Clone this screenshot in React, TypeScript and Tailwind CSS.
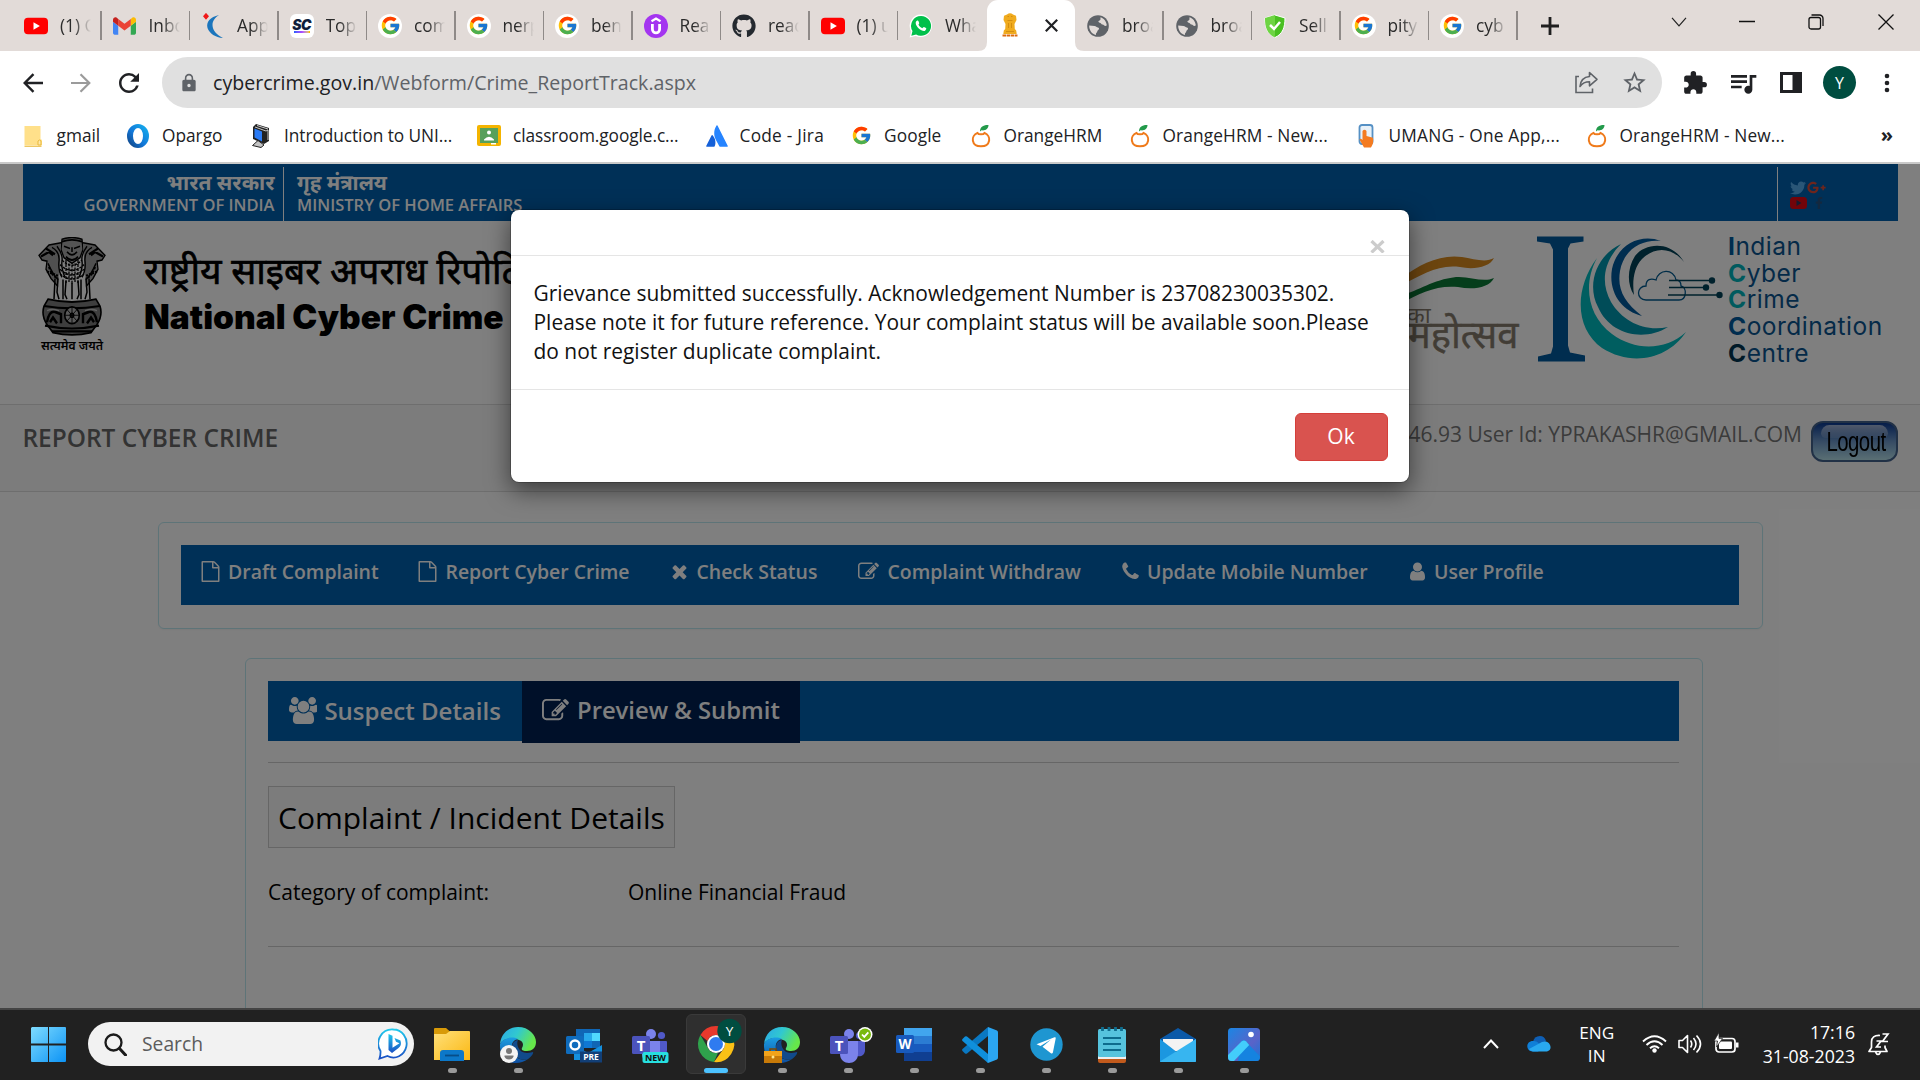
import React from 'react';
import { FcGoogle } from 'react-icons/fc';
import { FaGithub, FaYoutube, FaTwitter, FaGooglePlusG, FaFacebookF } from 'react-icons/fa';
import { MdLock, MdStarBorder, MdExtension, MdQueueMusic, MdRefresh } from 'react-icons/md';

/* ---------- small shared icons ---------- */
const YouTube = () => (
  <svg width="24" height="24" viewBox="0 0 24 24">
    <rect x="0" y="3.7" width="24" height="16.6" rx="4" fill="#f00" />
    <path d="M9.5 8.2v7.6l6.4-3.8z" fill="#fff" />
  </svg>
);
const Gmail = () => (
  <svg width="23" height="18" viewBox="52 42 88 66">
    <path fill="#4285f4" d="M58 108h14V74L52 59v43c0 3.32 2.69 6 6 6" />
    <path fill="#34a853" d="M120 108h14c3.32 0 6-2.69 6-6V59l-20 15" />
    <path fill="#fbbc04" d="M120 48v26l20-15v-8c0-7.42-8.47-11.65-14.4-7.2" />
    <path fill="#ea4335" d="M72 74V48l24 18 24-18v26L96 92" />
    <path fill="#c5221f" d="M52 51v8l20 15V48l-5.600-4.200c-5.940-4.450-14.400-.22-14.400 7.200" />
  </svg>
);
const AppTrana = () => (
  <svg width="24" height="26" viewBox="0 0 24 26">
    <path d="M5 1l2 2.300-2 2.300L3 3.300z" fill="#f01818" stroke="#f01818" strokeWidth="1.500" />
    <path d="M18 2C9 4 5 9 6.500 15c2 5.500 8 9.500 15.500 10-6-3-10.500-7.500-10.500-13 0-4 2.500-7.500 6.500-10z" fill="#1b75bc" />
  </svg>
);
const ScLogo = () => (
  <div className="flex h-6 w-6 flex-col items-center justify-center rounded-md bg-white">
    <span className="font-['Inter'] text-[14px] leading-[13px] font-black tracking-tighter text-[#101f3c] italic">SC</span>
    <span className="h-[2px] w-4 bg-linear-to-r from-blue-600 via-purple-500 to-yellow-400" />
  </div>
);
const GoogleTab = () => (
  <div className="flex h-6 w-6 items-center justify-center rounded-full bg-white"><FcGoogle size={21} /></div>
);
const Udemy = () => (
  <svg width="24" height="24" viewBox="0 0 24 24">
    <circle cx="12" cy="12" r="12" fill="#a435f0" />
    <path d="M7.500 7.300L12 4.600l4.500 2.700" fill="none" stroke="#fff" strokeWidth="2.200" />
    <path d="M8.400 10v5.300c0 4.800 7.200 4.800 7.200 0V10" fill="none" stroke="#fff" strokeWidth="2.800" />
  </svg>
);
const WhatsApp = () => (
  <svg width="24" height="24" viewBox="0 0 24 24">
    <path d="M12 .5A11.300 11.300 0 0 0 2.300 17.600L.6 23.500l6-1.600A11.300 11.300 0 1 0 12 .5z" fill="#fff" />
    <path d="M12 2a9.900 9.900 0 0 0-8.500 15l-1.200 4.700 4.800-1.300A9.900 9.900 0 1 0 12 2z" fill="#00c04b" />
    <path d="M8.200 6.500c.5-.2 1 0 1.200.5l.8 1.900c.2.500-.8 1.500-.8 1.700.8 1.600 2.200 2.900 3.900 3.600.4 0 1.200-1.400 1.700-1.200l2 1c.8.400-.1 2.200-1 2.700-2.500 1.300-9.200-3.500-9.300-7.800 0-1 .6-2 1.500-2.400z" fill="#fff" />
  </svg>
);
const MiniEmblem = () => (
  <svg width="16" height="25" viewBox="0 0 16 25" fill="#f0ab1e">
    <path d="M5 1.500Q8-.8 11 1.500l3 1.200.5 4.300-2 4 .3 5 1.400 1.500.5 3.500H1.300l.5-3.500L3.200 16l.3-5-2-4L2 2.700z" />
    <path d="M5.500 3.500h1.500m2 0h1.500M5.500 7.500h5M6.500 10v5M9.500 10v5M4 18.500h8" stroke="#d08a10" strokeWidth=".9" />
    <path d="M.5 22.500h15" stroke="#dc6a0c" strokeWidth="2.200" strokeDasharray="3.500 .6" />
  </svg>
);
const Shield = () => (
  <svg width="24" height="24" viewBox="0 0 24 24">
    <path d="M12 1l10 3c0 9-2 16-10 19.500C4 20 2 13 2 4z" fill="#49c021" stroke="#fff" />
    <path d="M12 1L2 4c0 9 2 16 10 19.500z" fill="#6ed443" />
    <path d="M7 11l4 4 6-7" fill="none" stroke="#fff" strokeWidth="2.500" />
  </svg>
);
const Globe = () => (
  <svg width="22" height="22" viewBox="0 0 22 22">
    <circle cx="11" cy="11" r="10.800" fill="#5f6368" />
    <path d="M13.500 2.200c3.500 1 6 4.500 6.300 8-.6.800-1.800 1-2.600.3-.8-1.200-2.700-.7-3.200-2-.4-1-2.300-.6-2.600-1.700-.2-1.200 1.600-1 2-2z" fill="#e2dbd8" />
    <path d="M2.200 10.500l5.300.5c1.500.3 2 1.300 3.500 1.500 1.600.3 1.200 2.200 0 2.700-1 .5-.5 2-1.500 2.600-.8.500-.4 1.500-.5 2.200-4-.8-7-4.800-6.800-9.500z" fill="#e2dbd8" />
  </svg>
);

type TabInfo = { icon: React.ReactNode; title: string; sep?: boolean };
const leftTabs: TabInfo[] = [
  { icon: <YouTube />, title: '(1) C', sep: true },
  { icon: <Gmail />, title: 'Inbo', sep: true },
  { icon: <AppTrana />, title: 'App', sep: true },
  { icon: <ScLogo />, title: 'Top', sep: true },
  { icon: <GoogleTab />, title: 'com', sep: true },
  { icon: <GoogleTab />, title: 'nerp', sep: true },
  { icon: <GoogleTab />, title: 'ben', sep: true },
  { icon: <Udemy />, title: 'Rea', sep: true },
  { icon: <FaGithub size={24} color="#24292f" />, title: 'reac', sep: true },
  { icon: <YouTube />, title: '(1) u', sep: true },
  { icon: <WhatsApp />, title: 'Wha' },
];
const rightTabs: TabInfo[] = [
  { icon: <Globe />, title: 'broa', sep: true },
  { icon: <Globe />, title: 'broa', sep: true },
  { icon: <Shield />, title: 'Sell', sep: true },
  { icon: <GoogleTab />, title: 'pity', sep: true },
  { icon: <GoogleTab />, title: 'cyb', sep: true },
];
const Tab = ({ icon, title, sep }: TabInfo) => (
  <div className="flex h-[51px] w-[88.5px] shrink-0 items-center pl-[11px]">
    <span className="flex w-6 shrink-0 items-center justify-center">{icon}</span>
    <span className="ml-[12px] w-[31px] shrink-0 overflow-hidden [mask-image:linear-gradient(to_right,black_45%,transparent)] text-[17.3px] whitespace-nowrap text-[#2b2b2b]">{title}</span>
    {sep && <span className="ml-auto h-[29px] w-[1.5px] bg-[#8f8a88]" />}
  </div>
);

const TabStrip = () => (
  <div className="flex h-[51px] bg-[#e2dbd8] pl-[13px]">
    {leftTabs.map((t, i) => <Tab key={i} {...t} />)}
    <div className="relative flex h-[51px] w-[88.5px] shrink-0 items-center rounded-t-[11px] bg-white pl-[15px]">
      <svg className="absolute bottom-0 -left-[9px]" width="9" height="9"><path d="M9 0v9H0Q9 9 9 0z" fill="#fff" /></svg>
      <svg className="absolute -right-[9px] bottom-0" width="9" height="9"><path d="M0 0v9h9Q0 9 0 0z" fill="#fff" /></svg>
      <MiniEmblem />
      <svg className="ml-[27px]" width="13" height="13" viewBox="0 0 13 13"><path d="M.8.800l11.400 11.400M12.200.8L.8 12.200" stroke="#202124" strokeWidth="2.200" /></svg>
    </div>
    {rightTabs.map((t, i) => <Tab key={i} {...t} />)}
    <svg className="mt-[17px] ml-[23px]" width="18" height="18"><path d="M9 0v18M0 9h18" stroke="#1f1f1f" strokeWidth="2.800" /></svg>
    <div className="mt-[14px] mr-[26px] ml-auto flex h-4 items-center">
      <svg width="16" height="10" className="mr-[52px]"><path d="M1 .8l7 8 7-8" fill="none" stroke="#222" strokeWidth="1.200" /></svg>
      <svg width="16" height="16" className="mr-[53px]"><path d="M0 7.500h16" stroke="#111" strokeWidth="1.500" /></svg>
      <svg width="16" height="16" className="mr-[54px]" fill="none" stroke="#111" strokeWidth="1.300"><rect x="1" y="3.500" width="11.500" height="11.500" rx="2" /><path d="M3.500 1h8a3.500 3.500 0 0 1 3.500 3.500v7.500" /></svg>
      <svg width="16" height="16"><path d="M.5.500l15 15M15.500.5l-15 15" stroke="#111" strokeWidth="1.300" /></svg>
    </div>
  </div>
);

const Toolbar = () => (
  <div className="flex h-[63px] items-center bg-white">
    <svg className="ml-[23px]" width="20" height="20" viewBox="0 0 20 20" fill="none" stroke="#202124" strokeWidth="2.400"><path d="M20 10H2M10.500 1.200L1.700 10l8.800 8.800" /></svg>
    <svg className="ml-[28px]" width="20" height="20" viewBox="0 0 20 20" fill="none" stroke="#9b9b9b" strokeWidth="2.200"><path d="M0 10h18M9.500 1.200l8.800 8.800-8.800 8.800" /></svg>
    <MdRefresh className="ml-[23px] shrink-0" size={30} color="#202124" />
    <div className="ml-[18px] flex h-[51px] w-[1500px] shrink-0 items-center rounded-full bg-[#e0e0e0]">
      <MdLock className="ml-[17px]" size={20} color="#5f6368" />
      <span className="ml-[14px] text-[19.6px] text-[#5f6368]"><span className="text-[#202124]">cybercrime.gov.in</span>/Webform/Crime_ReportTrack.aspx</span>
      <svg className="mr-[22px] ml-auto" width="24" height="23" viewBox="0 0 24 23" fill="none" stroke="#5f6368" strokeWidth="1.600">
        <path d="M4 5.500H1V21.500h16.500v-4" /><path d="M14.500 1.500l7.500 6.800-7.500 6.500v-4c-4 0-7 1.200-9.500 4.700.5-5.500 3.500-9.500 9.500-10z" strokeLinejoin="round" />
      </svg>
      <MdStarBorder className="mr-[14px]" size={27} color="#5f6368" />
    </div>
    <MdExtension className="ml-[20px]" size={26} color="#202124" />
    <MdQueueMusic className="ml-[19px]" size={32} color="#202124" />
    <svg className="ml-[21px]" width="22" height="21"><path fillRule="evenodd" d="M0 0h22v21H0zM3 3v15h9.500V3z" fill="#202124" /></svg>
    <span className="ml-[21px] flex h-[33px] w-[33px] items-center justify-center rounded-full bg-[#004d40] text-[16px] text-white">Y</span>
    <svg className="ml-[28px]" width="6" height="20" fill="#202124"><circle cx="3" cy="3" r="2.300" /><circle cx="3" cy="10" r="2.300" /><circle cx="3" cy="17" r="2.300" /></svg>
  </div>
);

const Folder = () => <svg width="18" height="22" viewBox="0 0 18 22"><path d="M.5 1h16v13l1.500 1v5.500H.5z" fill="#ffe08a" /><path d="M14 20v-4q1.500-2 3 0v4z" fill="#ffe9ac" stroke="#e9b93c" /><path d="M.5 21.300h17" stroke="#e9b93c" /></svg>;
const Opargo = () => (
  <svg width="22" height="24" viewBox="0 0 22 24">
    <defs><linearGradient id="opg" x1="1" y1="0" x2="0" y2="1"><stop offset="0" stopColor="#15b8f2" /><stop offset=".55" stopColor="#1277d8" /><stop offset="1" stopColor="#123a72" /></linearGradient></defs>
    <path fillRule="evenodd" d="M11 0a11 12 0 1 0 0 24 11 12 0 0 0 0-24zm0 4a5 8 0 1 1 0 16 5 8 0 0 1 0-16z" fill="url(#opg)" />
  </svg>
);
const Unix = () => (
  <svg width="18" height="24" viewBox="0 0 18 24">
    <path d="M4 0l13 4v13l-5 3L1 15V3z" fill="#222" />
    <path d="M5 1.500l11 3.500M3 3l11 4M14 7l2-1v10" stroke="#ddd" strokeWidth=".9" fill="none" />
    <path d="M2.500 4.500L10 7.500v10l-7.500-4z" fill="#2a7bf6" />
    <path d="M.5 21.500l5.500-5 6 4.500-3 2.500z" fill="#c4c4c4" stroke="#222" />
  </svg>
);
const Classroom = () => (
  <svg width="24" height="21" viewBox="0 0 24 21">
    <rect width="24" height="21" rx="2" fill="#f4b400" /><rect x="3" y="3" width="18" height="15" fill="#57a05b" />
    <circle cx="12" cy="7.500" r="2" fill="#fff" /><path d="M7 14.500q5-5.500 10 0v1H7z" fill="#fff" /><path d="M14 18h5v1.500h-5z" fill="#fff" />
  </svg>
);
const Jira = () => (
  <svg width="22" height="22" viewBox="0 0 22 22">
    <path d="M6.600 10.200q-.6-.7-1.100.2L.2 21q-.2.700.5.700h7.400q.4 0 .6-.4c1.600-3.300.6-8.300-2.100-11.100z" fill="#1560d8" />
    <path d="M10.500.6c-3 4.700-2.800 10-.8 13.900l3.600 6.800q.2.400.6.400h7.400q.7 0 .5-.7L11.500.6q-.5-.7-1 0z" fill="#2684ff" />
  </svg>
);
const Orange = () => (
  <svg width="20" height="24" viewBox="0 0 20 24">
    <path d="M6.500 9C-.5 11.500 0 22.300 10 22.300S20.500 11.500 13.500 9C12.500 10.800 7.500 10.800 6.500 9z" fill="#fff" stroke="#ef7a1a" strokeWidth="2" />
    <path d="M9 7.500C9 3 12 .8 17.500 1 17.500 5 14 7 10.500 6.300z" fill="#239a4b" />
  </svg>
);
const Umang = () => (
  <svg width="16" height="24" viewBox="0 0 16 24">
    <rect x="1.500" y="1" width="13" height="19" rx="2.500" fill="#e8f1f8" stroke="#5590c4" strokeWidth="1.800" />
    <path d="M4.500 7q2-2.500 4 0v5l6.500 1.800q1 5.200-2 9.700H6L1.500 15.500q1-1.500 3 .5z" fill="#f47b20" />
  </svg>
);

const Bookmarks = () => (
  <div className="flex h-[50px] items-center border-b-2 border-[#c9c9c9] bg-white pr-[27px] pb-[5px] pl-[20.5px] text-[17.3px] text-[#202124]">
    {[
      { i: <Folder />, t: 'gmail', w: 'w-[105.5px]', s: '' },
      { i: <Opargo />, t: 'Opargo', w: 'w-[123px]', s: '' },
      { i: <Unix />, t: 'Introduction to UNI...', w: 'w-[228px]', s: '-ml-px -tracking-[0.06px]' },
      { i: <Classroom />, t: 'classroom.google.c...', w: 'w-[227.500px]', s: '-tracking-[0.08px]' },
      { i: <Jira />, t: 'Code - Jira', w: 'w-[144.500px]', s: '-ml-px tracking-[0.25px]' },
      { i: <FcGoogle size={21} />, t: 'Google', w: 'w-[119.500px]', s: '-ml-px tracking-[0.1px]' },
      { i: <Orange />, t: 'OrangeHRM', w: 'w-[159px]', s: '-ml-px' },
      { i: <Orange />, t: 'OrangeHRM - New...', w: 'w-[226px]', s: '-ml-px tracking-[0.13px]' },
      { i: <Umang />, t: 'UMANG - One App,...', w: 'w-[231px]', s: '-ml-px tracking-[0.2px]' },
      { i: <Orange />, t: 'OrangeHRM - New...', w: 'w-[210px]', s: '-ml-px tracking-[0.13px]' },
    ].map((b, k) => (
      <div key={k} className={'flex shrink-0 items-center ' + b.w}>
        <span className="mr-3 flex w-6 shrink-0 items-center justify-center">{b.i}</span>
        <span className={'whitespace-nowrap ' + b.s}>{b.t}</span>
      </div>
    ))}
    <span className="ml-auto pb-0.5 text-[20px] font-bold">»</span>
  </div>
);

/* ---------- site header ---------- */
const Emblem = () => (
  <svg width="68" height="99" viewBox="0 0 68 86" preserveAspectRatio="none" fill="none" stroke="#000" strokeWidth="1.300">
    <path d="M24 2q10-3 20 0l1 9-3 7-8 5-8-5-3-7z" fill="#a8a8a8" />
    <path d="M24 4q10-3 20 0M26 8l6 2m10-2l-6 2M29 13q5 5 10 0M28 17q6 6 12 0M34 9v4" strokeWidth="1.500" />
    <path d="M23 5L11 7 1 16l3 4 5 1-1 7 5 8 7 7M45 5l12 2 10 9-3 4-5 1 1 7-5 8-7 7" fill="#a0a0a0" />
    <path d="M3 17l8-4 4 3M65 17l-8-4-4 3M8 10l9 5M60 10l-9 5" strokeWidth="2" />
    <path d="M14 9q8 4 7 12t3 14M19 8q6 7 5 13t3 14M54 9q-8 4-7 12t-3 14M49 8q-6 7-5 13t-3 14M10 23q5 10 10 14M58 23q-5 10-10 14" strokeWidth="1.400" />
    <path d="M24 20q10 9 20 0M22 24q12 10 24 0M22 28q12 10 24 0M22 32q12 9 24 0M28 20v20M31 23v16M34 24v17M37 23v16M40 20v20" strokeWidth="1.300" strokeDasharray="2.500 1" />
    <path d="M11 26q3 8 9 10M57 26q-3 8-9 10M9 30l12 4M59 30l-12 4" strokeWidth="2" strokeDasharray="2 1.200" />
    <path d="M17 36l-1 18M20 36l-1 12 2 6M25 37v17M28 38l-1 12 2 4M34 40v14M40 38l1 12-2 4M43 37v17M48 36l1 12-2 6M51 36l1 18" strokeWidth="1.500" />
    <path d="M10 54q24 5 48 0l4 6q3 8-3 16l-6 7q-19 4-38 0l-6-7q-6-8-3-16z" fill="#7c7c7c" strokeWidth="1.600" />
    <path d="M6 60q28 4 56 0M7 77q27 5 54 0M14 82h40" strokeWidth="1.800" />
    <circle cx="34" cy="68" r="7.300" fill="#b5b5b5" strokeWidth="1.600" />
    <circle cx="34" cy="68" r="1.800" />
    <path d="M34 60.500v15M26.500 68h15M28.700 62.700l10.600 10.600M39.300 62.700L28.700 73.300" strokeWidth=".8" />
    <path d="M9 74q2-10 8-9l6 2v8M12 74l3-4 4 5M59 74q-2-10-8-9l-6 2v8M56 74l-3-4-4 5" strokeWidth="2.400" />
    <path d="M9 64q5-2 12 0M59 64q-5-2-12 0" stroke="#c4c4c4" strokeWidth="1.200" />
  </svg>
);

const AzadiLogo = () => (
  <svg width="120" height="135" viewBox="1400 230 120 135">
    <path d="M1400 279C1420 264 1440 254 1462 257c12 2 24 6 32 1-4 9-20 12-34 9-22-3-38 8-60 19z" fill="#d98a1e" />
    <path d="M1400 296c20-6 32-16 56-19 14-1 27 6 38 1-5 10-21 12-36 9-22-2-38 6-58 17z" fill="#0b7a36" />
    <text x="1407" y="322.500" fontSize="23" fill="#857b6c" fontFamily="Noto Sans, sans-serif">का</text>
    <text x="1408" y="348" fontSize="38" fill="#857b6c" stroke="#857b6c" strokeWidth=".5" fontFamily="Noto Sans, sans-serif">महोत्सव</text>
  </svg>
);

const I4CLogo = () => (
  <svg width="186" height="126" viewBox="1537 237 186 126">
    <path d="M1537 237.500h46.500v5l-13 2-2.500 5v97l2 7 15 3v6h-47v-5l13-3 2-7v-97l-3-6-13.500-2z" fill="#005a9e" />
    <path d="M1597 259C1574 290 1575 330 1602 349 C1632 368 1668 360 1686 333 C1665 352 1635 352 1612 335 C1587 316 1583 285 1597 259Z" fill="#00bcc0" />
    <path d="M1621 245C1597 256 1586 285 1598 308 C1610 336 1644 343 1668 328 C1645 333 1623 323 1611 303 C1600 283 1604 262 1621 245Z" fill="#0099b0" />
    <path d="M1661 242C1640 234 1617 246 1612 270 C1608 294 1622 312 1642 317 C1624 303 1617 290 1620 272 C1624 250 1642 240 1661 242Z" fill="#005a9e" />
    <path d="M1684 263C1672 242 1646 243 1635 257 C1627 270 1627 285 1634 296 C1632 282 1634 268 1642 260 C1655 247 1672 248 1684 263Z" fill="#004258" />
    <path d="M1646 301c-10 0-10-14 0-14 0-7 5-8 10-6 2-11 18-12 20 0 4 0 5 3 5 6 6 1 6 14-2 14z" fill="none" stroke="#005a90" strokeWidth="1.300" />
    <path d="M1669 281.500h42M1669 288.500h37M1668 296h50" stroke="#004258" strokeWidth="1.600" />
    <g fill="#004258"><circle cx="1712" cy="281.500" r="3.200" /><circle cx="1706" cy="288.500" r="3.200" /><circle cx="1719.500" cy="296" r="3.200" /></g>
  </svg>
);

const SiteHeader = () => (
  <>
    <div className="mr-[22px] ml-[23px] flex h-[57px] bg-[#0060ae] text-[16.5px] font-semibold text-white">
      <div className="mt-[3px] flex w-[261px] flex-col items-end border-r border-white pr-[8.500px]">
        <span className="h-[24px] text-[21px] leading-[30px] font-bold">भारत सरकार</span>
        <span className="leading-[28px]">GOVERNMENT OF INDIA</span>
      </div>
      <div className="mt-[3px] flex flex-col pl-[13px]">
        <span className="h-[24px] text-[20.600px] leading-[30px] font-bold">गृह मंत्रालय</span>
        <span className="leading-[28px]">MINISTRY OF HOME AFFAIRS</span>
      </div>
      <div className="mt-[3px] ml-auto w-[121px] border-l border-white pt-[14px] pl-[12px]">
        <div className="flex h-[13px] items-center gap-[1px]"><FaTwitter size={16} color="#55acee" /><FaGooglePlusG size={19} color="#dd4b39" /></div>
        <div className="mt-[1px] flex h-[15px] items-center gap-[6px]">
          <svg width="17" height="12"><rect width="17" height="12" rx="3.500" fill="#e50914" /><path d="M6.500 3v6l5-3z" fill="#2a3860" /></svg>
          <FaFacebookF size={12} color="#26507f" />
        </div>
      </div>
    </div>
    <div className="flex h-[183px] items-start pt-[16px] pr-[36px] pl-[38px]">
      <div className="flex w-[68px] flex-col items-center">
        <Emblem />
        <span className="text-[12.200px] leading-[20px] font-semibold whitespace-nowrap">सत्यमेव जयते</span>
      </div>
      <div className="ml-[38px] w-[480px]">
        <div className="h-[58px] text-[37.100px] leading-[66px] whitespace-nowrap [-webkit-text-stroke:0.7px_black]">राष्ट्रीय साइबर अपराध रिपोर्टिं</div>
        <div className="font-['Inter'] text-[33.500px] leading-[44px] font-black whitespace-nowrap">National Cyber Crime</div>
      </div>
      <div className="-mt-[7px] ml-auto"><AzadiLogo /></div>
      <div className="-mt-px ml-[17px]"><I4CLogo /></div>
      <div className="-mt-[4px] ml-[5px] w-[156px] font-['Inter'] text-[24.500px] leading-[26.700px] tracking-[0.5px] text-[#0a5590]">
        <div><b className="text-[#005a9e]">I</b>ndian</div>
        <div><b className="text-[#00b4bc]">C</b>yber</div>
        <div><b className="text-[#00b4bc]">C</b>rime</div>
        <div><b className="text-[#005a9e]">C</b>oordination</div>
        <div><b className="text-[#003450]">C</b>entre</div>
      </div>
    </div>
  </>
);

/* ---------- Font-Awesome 4 style glyphs ---------- */
const fa = {
  file: 'M1596 380q28 28 48 76t20 88v1152q0 40-28 68t-68 28h-1344q-40 0-68-28t-28-68v-1600q0-40 28-68t68-28h896q40 0 88 20t76 48zm-444-244v376h376q-10-29-22-41l-313-313q-12-12-41-22zm384 1528v-1024h-416q-40 0-68-28t-28-68v-416h-768v1536h1280z',
  times: 'M1490 1322q0 40-28 68l-136 136q-28 28-68 28t-68-28l-294-294-294 294q-28 28-68 28t-68-28l-136-136q-28-28-28-68t28-68l294-294-294-294q-28-28-28-68t28-68l136-136q28-28 68-28t68 28l294 294 294-294q28-28 68-28t68 28l136 136q28 28 28 68t-28 68l-294 294 294 294q28 28 28 68z',
  edit: 'M888 1184l116-116-152-152-116 116v56h96v96h56zm440-720q-16-16-33 1l-350 350q-17 17-1 33t33-1l350-350q17-17 1-33zm80 594v190q0 119-84.500 203.500t-203.500 84.500h-832q-119 0-203.500-84.500t-84.500-203.500v-832q0-119 84.500-203.500t203.500-84.500h832q63 0 117 25 15 7 18 23 3 17-9 29l-49 49q-14 14-32 8-23-6-45-6h-832q-66 0-113 47t-47 113v832q0 66 47 113t113 47h832q66 0 113-47t47-113v-126q0-13 9-22l64-64q15-15 35-7t20 29zm-96-738l288 288-672 672h-288v-288zm444 132l-92 92-288-288 92-92q28-28 68-28t68 28l152 152q28 28 28 68t-28 68z',
  phone: 'M1600 1240q0 27-10 70.500t-21 68.500q-21 50-122 106-94 51-186 51-27 0-53-3.500t-57.500-12.500-47-14.500-55.500-20.500-49-18q-98-35-175-83-127-79-264-216t-216-264q-48-77-83-175-3-9-18-49t-20.500-55.500-14.500-47-12.500-57.500-3.500-53q0-92 51-186 56-101 106-122 25-11 68.500-21t70.500-10q14 0 21 3 18 6 53 76 11 19 30 54t35 63.500 31 53.500q3 4 17.500 25t21.500 35.500 7 28.500q0 20-28.500 50t-62 55-62 53-28.500 46q0 9 5 22.500t8.500 20.500 14 24 11.500 19q76 137 174 235t235 174q2 1 19 11.500t24 14 20.500 8.500 22.500 5q18 0 46-28.500t53-62 55-62 50-28.500q14 0 28.500 7t35.500 21.500 25 17.500q25 15 53.500 31t63.500 35 54 30q70 35 76 53 3 7 3 21z',
  user: 'M1536 1399q0 109-62.500 187t-150.500 78h-854q-88 0-150.500-78t-62.500-187q0-85 8.500-160.500t31.500-152 58.500-131 94-89 134.500-34.500q131 128 313 128t313-128q76 0 134.500 34.500t94 89 58.500 131 31.500 152 8.500 160.500zm-256-887q0 159-112.500 271.500t-271.500 112.500-271.500-112.500-112.500-271.500 112.500-271.500 271.500-112.500 271.500 112.500 112.500 271.500z',
  users: 'M593 896q-162 5-265 128h-134q-82 0-138-40.500t-56-118.500q0-353 124-353 6 0 43.500 21t97.500 42.500 119 21.500q67 0 133-23-5 37-5 66 0 139 81 256zm1071 637q0 120-73 189.500t-194 69.500h-874q-121 0-194-69.500t-73-189.500q0-53 3.500-103.500t14-109 26.500-108.500 43-97.500 62-81 85.500-53.500 111.500-20q10 0 43 21.500t73 48 107 48 135 21.500 135-21.500 107-48 73-48 43-21.500q61 0 111.500 20t85.500 53.500 62 81 43 97.500 26.500 108.500 14 109 3.500 103.500zm-1024-1277q0 106-75 181t-181 75-181-75-75-181 75-181 181-75 181 75 75 181zm704 384q0 159-112.500 271.500t-271.500 112.500-271.500-112.500-112.500-271.500 112.500-271.500 271.500-112.500 271.500 112.500 112.500 271.500zm576 225q0 78-56 118.500t-138 40.500h-134q-103-123-265-128 81-117 81-256 0-29-5-66 66 23 133 23 59 0 119-21.500t97.500-42.500 43.500-21q124 0 124 353zm-128-609q0 106-75 181t-181 75-181-75-75-181 75-181 181-75 181 75 75 181z',
};
const Fa = ({ d, size, vw = 1792 }: { d: string; size: number; vw?: number }) => (
  <svg className="shrink-0" width={(size * vw) / 1792} height={size} viewBox={`0 0 ${vw} 1792`} fill="currentColor"><path d={d} /></svg>
);

const navItems = [
  { d: fa.file, t: 'Draft Complaint', w: 'w-[217.500px]', g: 'gap-[7.500px]' },
  { d: fa.file, t: 'Report Cyber Crime', w: 'w-[252px]', g: 'gap-[7.500px]' },
  { d: fa.times, t: 'Check Status', w: 'w-[189px]', g: 'gap-[6.500px]' },
  { d: fa.edit, t: 'Complaint Withdraw', w: 'w-[261.500px]', g: 'gap-[8.500px]' },
  { d: fa.phone, t: 'Update Mobile Number', w: 'w-[287px]', g: 'gap-[6.500px]' },
  { d: fa.user, t: 'User Profile', w: 'w-[140px]', g: 'gap-[6.500px]' },
];

const Page = () => (
  <div className="relative h-[844px] overflow-hidden bg-white text-[21px] text-black">
    <SiteHeader />
    <div className="flex h-[88px] justify-between border-y border-[#ddd] bg-[#f9f9f9] pr-[22px] pl-[22.500px]">
      <h1 className="mt-[16.500px] text-[24.450px] leading-[32px] font-semibold text-[#666]">REPORT CYBER CRIME</h1>
      <div className="flex items-start">
        <span className="mt-[14px] mr-[9px] leading-[30px] text-[#777]">46.93 User Id: YPRAKASHR@GMAIL.COM</span>
        <div className="relative mt-[16px] flex h-[41px] w-[87px] items-center justify-center rounded-[12px] border-2 border-[#43628c] bg-linear-to-b from-[#0b3a94] via-[#6d97c8] to-[#b4dfe8]">
          <span className="absolute top-[2px] left-[8px] h-[13px] w-[67px] rounded-t-[9px] rounded-b-[5px] bg-linear-to-b from-white/60 to-white/10" />
          <span className="relative ml-[3px] scale-x-[0.74] font-['Liberation_Sans'] text-[27.500px] leading-[36px] tracking-tight text-black">Logout</span>
        </div>
      </div>
    </div>

    <div className="mt-[30px] ml-[158px] h-[107px] w-[1605px] rounded-[6px] border border-[#bce8f1] px-[22px] pt-[22px] shadow-xs">
      <nav className="mr-px flex h-[60px] items-start bg-[#0060ae] pl-[18.500px] text-[19.450px] font-semibold text-white">
        {navItems.map((n, i) => (
          <div key={i} className={'flex h-[53px] shrink-0 items-center whitespace-nowrap ' + n.w + ' ' + n.g}>
            <Fa d={n.d} size={21} />{n.t}
          </div>
        ))}
      </nav>
    </div>

    <div className="mt-[29px] ml-[245px] h-[400px] w-[1458px] rounded-t-[6px] border border-[#bce8f1] pt-[22px] pr-[23px] pl-[22px]">
      <div className="flex h-[60px] items-start bg-[#0060ae] text-[24px] font-semibold text-white">
        <div className="flex h-[59px] w-[254px] items-center gap-[7px] pl-[20.500px] whitespace-nowrap"><Fa d={fa.users} size={27} vw={1920} />Suspect Details</div>
        <div className="flex h-[62px] w-[278px] items-center gap-[8px] bg-[#002052] pb-[3px] pl-[20px] text-[23.800px] whitespace-nowrap"><Fa d={fa.edit} size={27} />Preview &amp; Submit</div>
      </div>
      <div className="mt-[21px] h-px bg-[#ccc]" />
      <div className="mt-[23px] flex h-[62px] w-[407px] items-center border border-[#ccc] bg-[#f9f9f9] pl-[9px] text-[30px]">Complaint / Incident Details</div>
      <div className="mt-[29px] flex leading-[30px]">
        <span className="w-[360px]">Category of complaint:</span>
        <span>Online Financial Fraud</span>
      </div>
      <div className="mt-[39px] h-px bg-[#ccc]" />
    </div>

    <div className="absolute inset-0 bg-black/50" />
    <div className="absolute top-[45px] left-[510px] h-[274px] w-[900px] rounded-[9px] border border-black/20 bg-white bg-clip-padding shadow-[0_8px_23px_rgba(0,0,0,0.5)]">
      <div className="flex h-[46px] items-end justify-end border-b border-[#e5e5e5] pr-[24px]">
        <svg className="mb-[2px]" width="15" height="13"><path d="M1.500 1l12 11.500M13.500 1l-12 11.500" stroke="#ccc" strokeWidth="3.200" /></svg>
      </div>
      <p className="h-[134px] border-b border-[#e5e5e5] pt-[23px] pl-[22.500px] text-[20.950px] leading-[29px] whitespace-nowrap text-[#111]">
        Grievance submitted successfully. Acknowledgement Number is 23708230035302.<br />
        Please note it for future reference. Your complaint status will be available soon.Please<br />
        do not register duplicate complaint.
      </p>
      <div className="flex justify-end pt-[23px] pr-[21.500px]">
        <button className="h-[47.500px] w-[93px] rounded-[6px] border border-[#d43f3a] bg-[#d9534f] text-white">Ok</button>
      </div>
    </div>
  </div>
);

/* ---------- taskbar ---------- */
const WinLogo = () => (
  <svg width="35" height="35" viewBox="0 0 35 35">
    <defs><linearGradient id="wl" x1="0" y1="0" x2="1" y2="1"><stop offset="0" stopColor="#7fdcff" /><stop offset="1" stopColor="#0c93f5" /></linearGradient></defs>
    <path d="M1 0h16v16.500H0V1zM18 0h16q1 0 1 1v15.500H18zM0 18.500h17V35H1q-1 0-1-1zM18 18.500h17V34q0 1-1 1H18z" fill="url(#wl)" />
  </svg>
);
const Bing = () => (
  <svg width="30" height="32" viewBox="0 0 30 32">
    <defs><linearGradient id="bg1" x1="0" y1="0" x2="0" y2="1"><stop offset="0" stopColor="#1fc8ec" /><stop offset="1" stopColor="#1a4fc4" /></linearGradient></defs>
    <path d="M15.500 1.500a13.200 14 0 1 1-6 26.500L1.500 30.500q1.200-3.500 1-7.500A14 14 0 0 1 15.500 1.500z" fill="#fff" stroke="url(#bg1)" strokeWidth="1.800" />
    <path d="M10.500 6l4 1.800v12l7-4.500-3.500-1.500-1.500-3.800 6 2.500q1.500 5-2 7.500l-6.500 5-3.500-3z" fill="url(#bg1)" />
  </svg>
);
const Explorer = () => (
  <svg width="36" height="33" viewBox="0 0 36 33">
    <defs><linearGradient id="ex" x1="0" y1="0" x2="1" y2="1"><stop offset="0" stopColor="#ffe07a" /><stop offset="1" stopColor="#fbb813" /></linearGradient></defs>
    <path d="M0 1q0-1 1-1h11l4 3.500V8H0z" fill="#d89a08" /><path d="M0 6h12l4-3h19q1 0 1 1v28H0z" fill="url(#ex)" />
    <path d="M6 33V25q0-3 3-3h18q3 0 3 3v8z" fill="#0c78c9" /><path d="M11 27.500h14" stroke="#074d88" strokeWidth="1.800" />
  </svg>
);
const EdgeBase = () => (
  <>
    <defs>
      <linearGradient id="eg1" x1="0" y1="0" x2="1" y2=".4"><stop offset="0" stopColor="#2aa7e8" /><stop offset=".5" stopColor="#31c8d0" /><stop offset="1" stopColor="#66e74a" /></linearGradient>
      <linearGradient id="eg2" x1="0" y1="0" x2="0" y2="1"><stop offset="0" stopColor="#1b9de2" /><stop offset="1" stopColor="#0f4fa0" /></linearGradient>
    </defs>
    <path d="M0 17C1 7 8 0 18 0c11 0 18 8 18 15 0 6-4 9-9 9-4 0-6-1-5-3 2-3 1-7-3-8C12 10 3 11 0 17z" fill="url(#eg1)" />
    <path d="M0 17C3 11 12 9 18 12c-5 1-7 5-6 10 1 7 8 13 16 10C17 40 1 36 0 20z" fill="url(#eg2)" />
    <path d="M12 20c0-4 3-7 6-7-2 3 0 13 9 13 3 0 5-1 6-1 1 1-2 5-5 7-8 3-16-4-16-12z" fill="#114a8b" />
  </>
);
const Edge = () => (
  <svg width="36" height="36" viewBox="0 0 36 36"><EdgeBase /><circle cx="9" cy="27" r="9" fill="#f4f4f4" /><circle cx="9" cy="24" r="3" fill="#777" /><path d="M4.500 28.500h9v1q-1 3-4.500 3t-4.500-3z" fill="#777" /></svg>
);
const EdgeWork = () => (
  <svg width="36" height="36" viewBox="0 0 36 36"><EdgeBase /><path d="M0 24h18v12H0z" fill="#c87a08" /><path d="M0 24h18v5H0z" fill="#f2a31b" /><path d="M6 24v-2h6v2" fill="none" stroke="#7a4600" strokeWidth="1.500" /><circle cx="9" cy="30" r="1.500" fill="#ffe48a" /></svg>
);
const Outlook = () => (
  <svg width="36" height="36" viewBox="0 0 36 36">
    <rect x="10" y="2" width="24" height="19" fill="#1066b5" /><path d="M18 6h8v8h-8z" fill="#28a8ea" /><path d="M26 6h8v8h-8z" fill="#50d9ff" /><path d="M18 14h8v7h-8z" fill="#0f78d4" />
    <path d="M8 18l14 8 14-8v8H8z" fill="#1490df" /><path d="M8 26h10v7H8z" fill="#1490df" />
    <rect y="9" width="18" height="18" rx="1.500" fill="#0f6cbd" /><circle cx="9" cy="18" r="4.500" fill="none" stroke="#fff" strokeWidth="2.500" />
    <rect x="14" y="24.500" width="22" height="11" fill="#123f77" /><text x="25" y="33.300" fontSize="8.500" fontWeight="bold" textAnchor="middle" fill="#fff" fontFamily="Open Sans">PRE</text>
  </svg>
);
const TeamsBase = () => (
  <>
    <circle cx="19" cy="7" r="5" fill="#7b83eb" /><circle cx="29.500" cy="8.500" r="3.600" fill="#5059c9" />
    <path d="M24 14h10q1 0 1 1v8c0 7-8 8-11 4z" fill="#5059c9" /><path d="M10 14h18v13c0 12-18 12-18 0z" fill="#7b83eb" />
    <rect y="9" width="18" height="18" rx="1.500" fill="#4b53bc" /><text x="9" y="23.500" fontSize="15" fontWeight="bold" textAnchor="middle" fill="#fff" fontFamily="Open Sans">T</text>
  </>
);
const TeamsNew = () => (
  <svg width="36" height="36" viewBox="0 0 36 36" className="overflow-visible"><TeamsBase /><rect x="10.500" y="25" width="26" height="11" rx="2" fill="#27e0e0" /><text x="23.500" y="33.800" fontSize="9" fontWeight="bold" textAnchor="middle" fill="#111" fontFamily="Open Sans">NEW</text></svg>
);
const Teams = () => (
  <svg width="36" height="36" viewBox="0 0 36 36" className="overflow-visible"><TeamsBase /><circle cx="35" cy="7.500" r="7.500" fill="#fff" /><circle cx="35" cy="7.500" r="6" fill="#78b90d" /><path d="M32 7.500l2.300 2.400 4-4.600" fill="none" stroke="#fff" strokeWidth="1.800" /></svg>
);
const Chrome = () => (
  <svg width="44" height="44" viewBox="-2 -8 44 44" className="overflow-visible">
    <path d="M18 0a18 18 0 0 1 15.600 9H18a9 9 0 0 0-8.500 6L2.400 9A18 18 0 0 1 18 0z" fill="#e8392c" />
    <path d="M2.400 9l7.800 13.500a9 9 0 0 0 9.800 4.300L16 36A18 18 0 0 1 2.400 9z" fill="#2fa24c" />
    <path d="M33.600 9A18 18 0 0 1 16 36l9.800-13.500A9 9 0 0 0 18 9z" fill="#fbc116" />
    <circle cx="18" cy="18" r="9" fill="#fff" /><circle cx="18" cy="18" r="7" fill="#2f7bf0" />
    <circle cx="31.500" cy="5" r="12.200" fill="#004d40" /><text x="31.500" y="10" fontSize="13.500" textAnchor="middle" fill="#fff" fontFamily="Open Sans">Y</text>
  </svg>
);
const Word = () => (
  <svg width="36" height="33" viewBox="0 0 36 33">
    <path d="M8 0h28v9H8z" fill="#41a5ee" /><path d="M8 8h28v8H8z" fill="#2b7cd3" /><path d="M8 16h28v8H8z" fill="#185abd" /><path d="M8 24h28v9H8z" fill="#103f91" />
    <rect y="7" width="18" height="18" rx="1.500" fill="#185abd" /><text x="9" y="21" fontSize="13.500" fontWeight="bold" textAnchor="middle" fill="#fff" fontFamily="Open Sans">W</text>
  </svg>
);
const VsCode = () => (
  <svg width="36" height="36" viewBox="0 0 36 36">
    <path d="M26 0v9L5 26.500q-1 .7-2 0l-2.500-2.500q-.8-1 0-2z" fill="#0a78c2" /><path d="M26 36v-9L5 9.500q-1-.7-2 0L.5 12q-.8 1 0 2z" fill="#0f8fdc" />
    <path d="M26 0l9 3.500q1 .5 1 2v25q0 1.500-1 2L26 36q-1-.5 0-3z" fill="#2ba6f2" />
  </svg>
);
const Telegram = () => (
  <svg width="33" height="33" viewBox="0 0 33 33"><circle cx="16.500" cy="16.500" r="16.200" fill="#1e96d1" /><path d="M6.500 16.300L24.500 9.300q1.500-.4 1.200 1.300l-2.800 14q-.5 1.500-2 .7l-8.400-6.600 8.500-7.300-10.500 6.500z" fill="#fff" /></svg>
);
const Notepad = () => (
  <svg width="28" height="36" viewBox="0 0 28 36">
    <path d="M0 30h28v4q0 2-2 2H2q-2 0-2-2z" fill="#c25a1c" /><path d="M0 28h28v4H0z" fill="#eee" /><rect y="2" width="28" height="28" rx="1.500" fill="#56c3dd" />
    <path d="M5 11h18M5 17h18M5 23h18" stroke="#0d6c8d" strokeWidth="2" /><path d="M4.500 0v4M11 0v4M17.500 0v4M23.500 0v4" stroke="#0f6d8e" strokeWidth="2.800" />
  </svg>
);
const Mail = () => (
  <svg width="36" height="34" viewBox="0 0 36 34"><path d="M0 11L18 0l18 11v4H0z" fill="#0b59a8" /><path d="M3 11h30v12H3z" fill="#f3f3f3" /><path d="M0 11l18 14L36 11v22q0 1-1 1H1q-1 0-1-1z" fill="#1b97e0" /><path d="M36 11L0 33.500q.3.500 1 .5h34q1 0 1-1z" fill="#37b5f0" /></svg>
);
const Photos = () => (
  <svg width="32" height="33" viewBox="0 0 32 33">
    <defs><linearGradient id="ph" x1="0" y1="0" x2="1" y2="1"><stop offset="0" stopColor="#1a86e4" /><stop offset=".6" stopColor="#5a63c8" /><stop offset="1" stopColor="#1675d8" /></linearGradient></defs>
    <rect width="32" height="33" rx="3.500" fill="url(#ph)" />
    <path d="M13 13.500q2.500-2.500 5 0L32 28.500q-.2 4.500-4 4.500H10z" fill="#1583e0" />
    <path d="M0 27L13.500 13.500q2.500-2.200 4.700 0l3 3.500L6 33H3.500Q0 33 0 29z" fill="#43cdfb" />
    <circle cx="23" cy="6.500" r="2.800" fill="#fff" />
  </svg>
);

const apps = [
  { i: <Explorer />, d: true }, { i: <Edge />, d: true }, { i: <Outlook />, d: false }, { i: <TeamsNew />, d: false },
  { i: <Chrome />, d: true, on: true }, { i: <EdgeWork />, d: true }, { i: <Teams />, d: true }, { i: <Word />, d: true },
  { i: <VsCode />, d: true }, { i: <Telegram />, d: true }, { i: <Notepad />, d: true }, { i: <Mail />, d: true }, { i: <Photos />, d: true },
];

const Taskbar = () => (
  <div className="flex h-[72px] items-center border-t-2 border-[#444] bg-[#212121] pb-[2px] text-white">
    <div className="ml-[31px]"><WinLogo /></div>
    <div className="ml-[22px] flex h-[44px] w-[326px] items-center rounded-full bg-[#f2f2f2] pr-[6px] pl-[16px]">
      <svg width="23" height="23" fill="none" stroke="#1b1b1b" strokeWidth="2.300"><circle cx="9.500" cy="9.500" r="8" /><path d="M15.500 15.500l6 6.500" strokeLinecap="round" strokeWidth="3" /></svg>
      <span className="mr-auto ml-[15px] text-[19.300px] text-[#5c5c5c]">Search</span>
      <Bing />
    </div>
    <div className="ml-[5px] flex">
      {apps.map((a, i) => (
        <div key={i} className="flex w-[66px] justify-center">
          <div className={'flex h-[60px] w-[60px] flex-col items-center rounded-[6px] ' + (a.on ? 'border border-[#3a3a3a] bg-[#2f2f2f]' : 'border border-transparent')}>
            <div className={a.on ? 'flex h-[53px] w-[42px] items-start justify-start pt-[3px] pl-[1px]' : 'flex h-[53px] items-center justify-center pt-[6px]'}>
              {a.i}
            </div>
            {a.d && <span className={a.on ? 'h-[5px] w-[24px] rounded-full bg-[#4cc2ff]' : 'h-[5px] w-[9px] rounded-full bg-[#9a9a9a]'} />}
          </div>
        </div>
      ))}
    </div>
    <div className="mr-[30px] ml-auto flex items-center">
      <svg width="16" height="10" className="mr-[28px]"><path d="M1 9l7-7.500L15 9" fill="none" stroke="#fff" strokeWidth="2" /></svg>
      <svg width="24" height="16" viewBox="0 0 24 16" className="mr-[28px]"><path d="M6 6q1-6 7-6 4.500 0 6 5l-6 6z" fill="#0f5fb4" /><path d="M5.500 15.500C-1.500 15-1.500 5 6 5q4-.5 6 2.500l5 3-6 5z" fill="#0f7fd8" /><path d="M4.500 15q-2-.5-2.500-2l13-7q6-2 8 3 2 5-3 6.500H6z" fill="#29a9f0" /></svg>
      <div className="mr-[27px] flex w-[36px] flex-col items-center text-[17.200px] leading-[23.300px]"><span>ENG</span><span>IN</span></div>
      <svg width="25" height="18" viewBox="0 0 25 18" className="mr-[11px]" fill="none" stroke="#fff" strokeWidth="1.900"><path d="M1 6.500q11.500-10.500 23 0M4.500 10q8-7.500 16 0M8 13.300q4.500-4 9 0" /><circle cx="12.500" cy="15.500" r="2.200" fill="#fff" stroke="none" /></svg>
      <svg width="24" height="20" viewBox="0 0 24 20" className="mr-[12px]" fill="none" stroke="#fff" strokeWidth="1.600"><path d="M1 6.500h3.500L9.500 1.500v17l-5-5H1z" strokeLinejoin="round" /><path d="M12.500 6.500q2.500 3.500 0 7M15.500 4q5 6 0 12M18.500 1.500q8 8.500 0 17" /></svg>
      <svg width="25" height="21" viewBox="0 -1 25 21" className="mr-[24px] mb-1"><rect x="2" y="5.500" width="19" height="13.500" rx="3" fill="none" stroke="#fff" strokeWidth="1.700" /><rect x="5" y="8.500" width="13" height="7.500" rx="1" fill="#fff" /><path d="M22 9.500h2.500v5H22z" fill="#fff" /><path d="M5-.5L0 8h3.500L2.500 14 8.500 5.500H5z" fill="#fff" stroke="#212121" strokeWidth=".7" /></svg>
      <div className="mr-[13px] flex flex-col items-end pb-[1px] text-[17.700px] leading-[24px]"><span>17:16</span><span>31-08-2023</span></div>
      <svg width="22" height="23" viewBox="0 0 22 23" fill="none" stroke="#fff" strokeWidth="1.700"><path d="M12 2.500Q3.500 2 3.500 9v5.500L1 18.500h18l-2-4v-2" strokeLinejoin="round" /><path d="M7.500 19q2.500 5 5 0M14.500 1h5.500l-5.500 7.500H20M8.500 8h4.500l-4.500 6H13" /></svg>
    </div>
  </div>
);

export default function App() {
  return (
    <div className="h-[1080px] w-[1920px] overflow-hidden bg-white font-['Open_Sans','Noto_Sans',sans-serif]">
      <TabStrip />
      <Toolbar />
      <Bookmarks />
      <Page />
      <Taskbar />
    </div>
  );
}
